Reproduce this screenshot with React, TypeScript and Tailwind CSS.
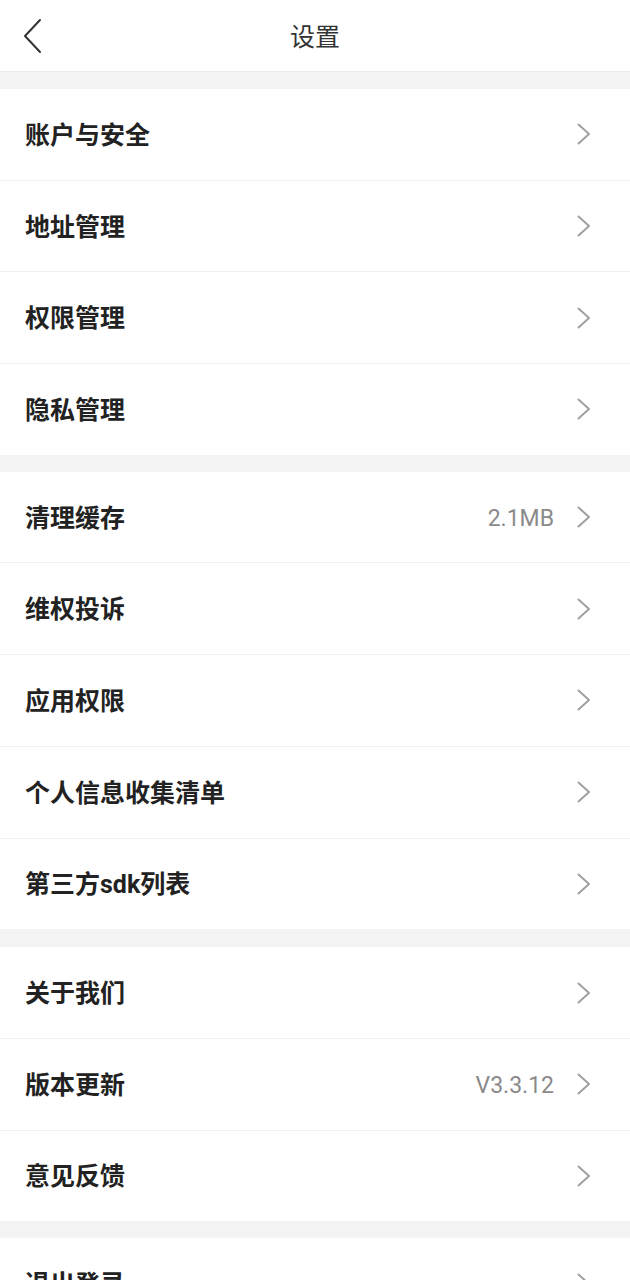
import React from "react";

const groups: { label: string; value?: string }[][] = [
  [{ label: "账户与安全" }, { label: "地址管理" }, { label: "权限管理" }, { label: "隐私管理" }],
  [
    { label: "清理缓存", value: "2.1MB" },
    { label: "维权投诉" },
    { label: "应用权限" },
    { label: "个人信息收集清单" },
    { label: "第三方sdk列表" },
  ],
  [{ label: "关于我们" }, { label: "版本更新", value: "V3.3.12" }, { label: "意见反馈" }],
  [{ label: "退出登录" }],
];

function Chevron() {
  return (
    <svg width="16" height="22" viewBox="0 0 16 22" fill="none" className="shrink-0">
      <path d="M2.5 1.5 L13 11 L2.5 20.5" stroke="#a0a0a0" strokeWidth="2" strokeLinecap="round" strokeLinejoin="round" />
    </svg>
  );
}

export default function App() {
  return (
    <div
      className="w-[630px] h-[1280px] overflow-hidden bg-[#f4f4f4]"
      style={{ fontFamily: 'Roboto, "Noto Sans CJK SC", sans-serif' }}
    >
      <div className="relative h-[72px] bg-white border-b border-[#ebebeb] flex items-center justify-center">
        <svg
          width="24"
          height="36"
          viewBox="0 0 24 36"
          fill="none"
          className="absolute left-[21px] top-[18px]"
        >
          <path d="M19 2 L4 18 L19 34" stroke="#333" strokeWidth="2" strokeLinecap="round" strokeLinejoin="round" />
        </svg>
        <span className="text-[25px] text-[#333] leading-none pt-[4px]">设置</span>
      </div>
      {groups.map((g, gi) => (
        <div key={gi} className={`${gi === 2 ? "mt-[18px]" : "mt-[17px]"} bg-white`}>
          {g.map((r, ri) => (
            <div
              key={ri}
              className={`h-[90.7px] flex items-center pl-[25px] pr-[38px] box-content ${
                ri < g.length - 1 ? "border-b border-[#efefef]" : ""
              }`}
            >
              <span className="flex-1 text-[25px] font-bold text-[#222] leading-none pt-[2px]">{r.label}</span>
              {r.value && (
                <span className="text-[23px] text-[#8a8a8a] mr-[22px] leading-none pt-[2px]">{r.value}</span>
              )}
              <Chevron />
            </div>
          ))}
        </div>
      ))}
    </div>
  );
}
